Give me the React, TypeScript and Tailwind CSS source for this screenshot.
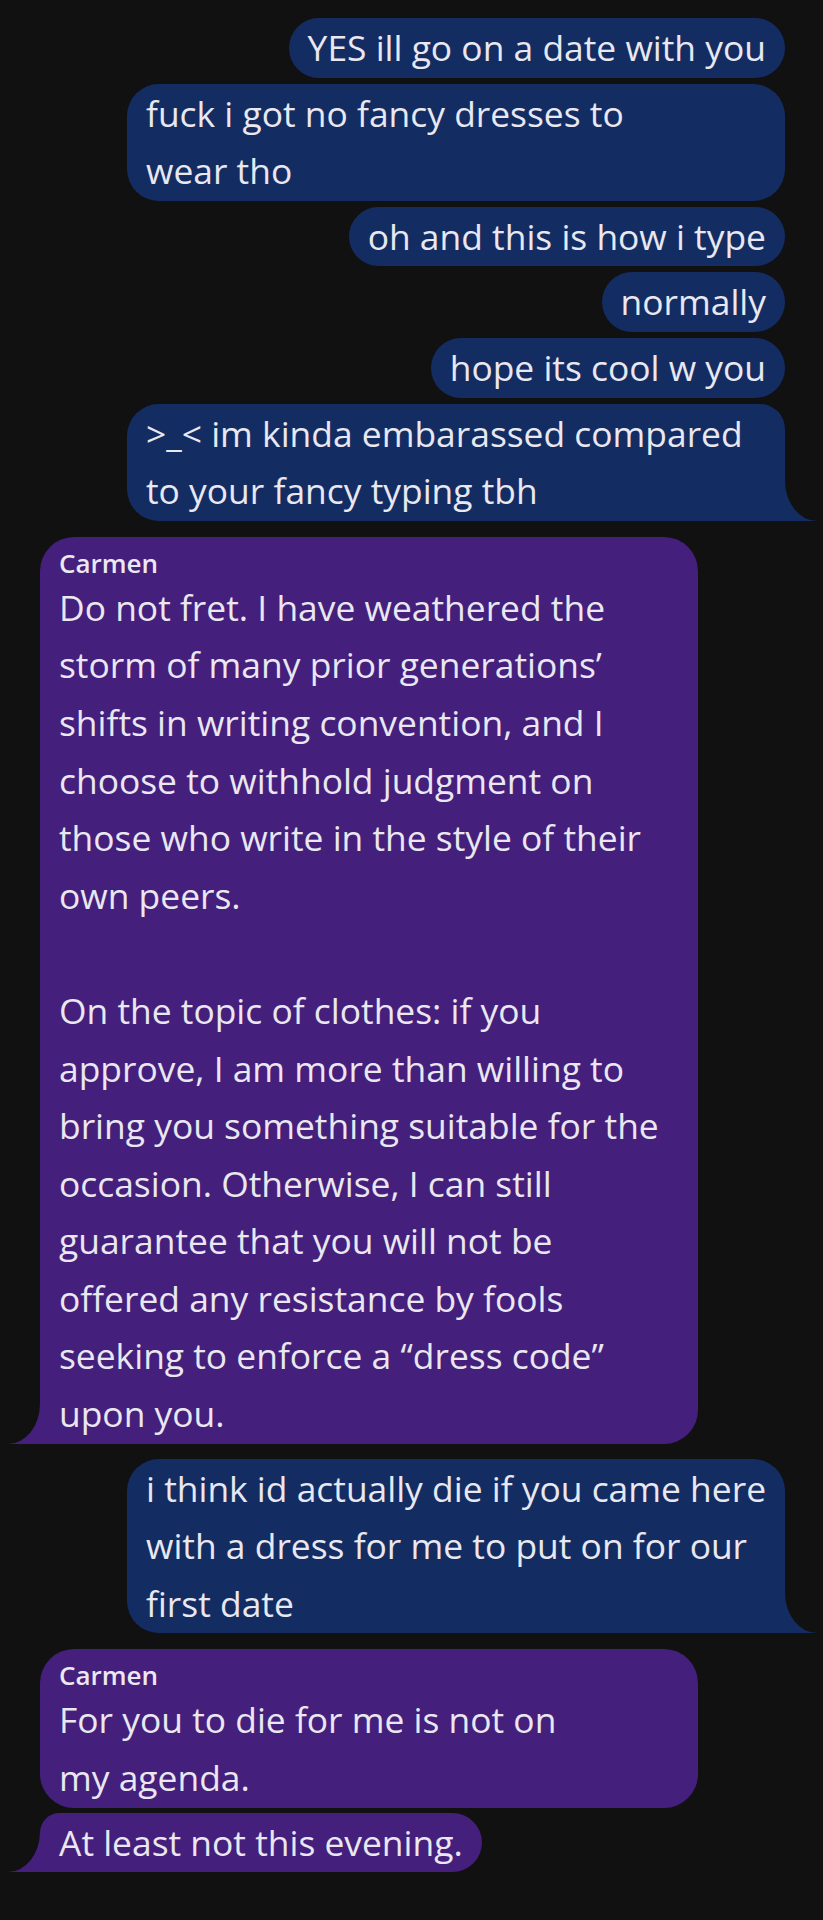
import React from "react";

const BLUE = "bg-[#132d63]";
const PURPLE = "bg-[#451f7c]";

function TailRight() {
  return (
    <svg
      className="absolute right-[-32px] bottom-0 h-[40px] w-[32px]"
      viewBox="0 0 32 40"
      aria-hidden="true"
    >
      <path d="M0 0 A32 40 0 0 0 32 40 L0 40 Z" fill="#132d63" />
    </svg>
  );
}

function TailLeft() {
  return (
    <svg
      className="absolute left-[-32px] bottom-0 h-[40px] w-[32px]"
      viewBox="0 0 32 40"
      aria-hidden="true"
    >
      <path d="M32 0 A32 40 0 0 1 0 40 L32 40 Z" fill="#451f7c" />
    </svg>
  );
}

function Lines({ lines }: { lines: string[] }) {
  return (
    <>
      {lines.map((l, i) => (
        <span key={i} className="block whitespace-nowrap">
          {l === "" ? "\u00a0" : l}
        </span>
      ))}
    </>
  );
}

function Out({
  lines,
  tail = false,
  extra = "",
}: {
  lines: string[];
  tail?: boolean;
  extra?: string;
}) {
  const multi = lines.length > 1;
  return (
    <div
      className={`relative ${BLUE} px-[19px] py-px ${
        multi ? "w-[658px] rounded-[32px]" : "rounded-[30px]"
      } ${tail ? "rounded-br-none" : ""} ${extra}`}
    >
      <Lines lines={lines} />
      {tail && <TailRight />}
    </div>
  );
}

function In({
  lines,
  name = false,
  tail = false,
  extra = "",
}: {
  lines: string[];
  name?: boolean;
  tail?: boolean;
  extra?: string;
}) {
  const multi = lines.length > 1 || name;
  return (
    <div
      className={`relative ${PURPLE} px-[19px] pb-px ${name ? "pt-[10px]" : "pt-px"} ${
        multi ? "w-[658px] rounded-[34px]" : "rounded-[30px]"
      } ${tail ? "rounded-bl-none" : ""} ${extra}`}
    >
      {name && (
        <div className="text-[26px] leading-[32px] font-semibold text-[#ece8f2]">
          Carmen
        </div>
      )}
      <Lines lines={lines} />
      {tail && <TailLeft />}
    </div>
  );
}

export default function App() {
  return (
    <div className="min-h-[1920px] w-full bg-[#111111] pl-[40px] pr-[38px] pt-[18px] font-['Open_Sans','Noto_Sans',sans-serif] text-[35.4px] leading-[57.6px] text-[#e9e7f0]">
      <div className="flex flex-col items-end gap-[6px]">
        <Out lines={["YES ill go on a date with you"]} />
        <Out lines={["fuck i got no fancy dresses to", "wear tho"]} />
        <Out lines={["oh and this is how i type"]} />
        <Out lines={["normally"]} />
        <Out lines={["hope its cool w you"]} />
        <Out
          lines={[">_< im kinda embarassed compared", "to your fancy typing tbh"]}
          tail
          extra="rounded-tr-[25px]"
        />
      </div>

      <div className="mt-[16px] flex flex-col items-start">
        <In
          name
          tail
          lines={[
            "Do not fret. I have weathered the",
            "storm of many prior generations\u2019",
            "shifts in writing convention, and I",
            "choose to withhold judgment on",
            "those who write in the style of their",
            "own peers.",
            "",
            "On the topic of clothes: if you",
            "approve, I am more than willing to",
            "bring you something suitable for the",
            "occasion. Otherwise, I can still",
            "guarantee that you will not be",
            "offered any resistance by fools",
            "seeking to enforce a \u201cdress code\u201d",
            "upon you.",
          ]}
        />
      </div>

      <div className="mt-[15px] flex flex-col items-end">
        <Out
          tail
          lines={[
            "i think id actually die if you came here",
            "with a dress for me to put on for our",
            "first date",
          ]}
        />
      </div>

      <div className="mt-[16px] flex flex-col items-start gap-[5px]">
        <In name lines={["For you to die for me is not on", "my agenda."]} />
        <In tail lines={["At least not this evening."]} extra="rounded-tl-[20px]" />
      </div>
    </div>
  );
}
